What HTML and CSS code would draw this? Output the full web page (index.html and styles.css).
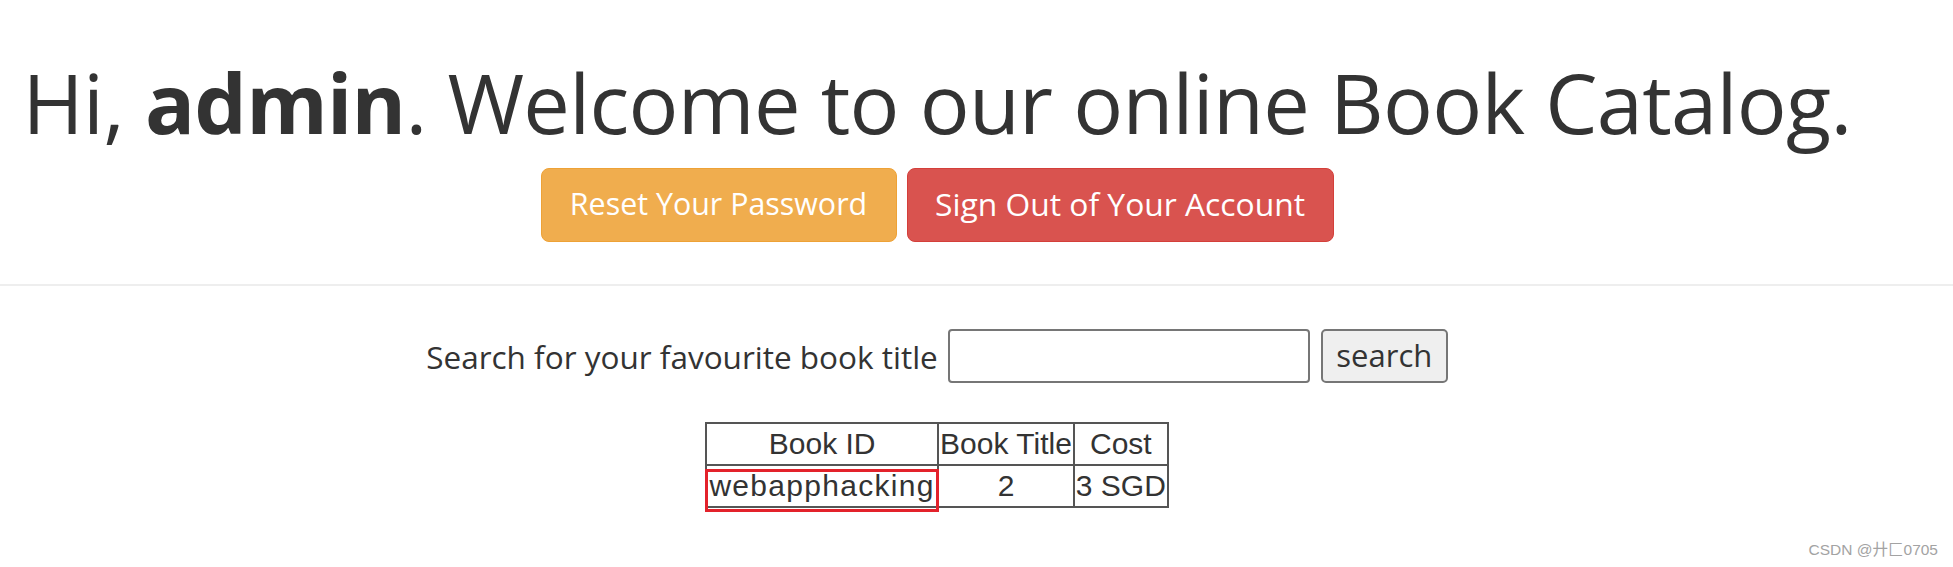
FILE: index.html
```html
<!DOCTYPE html>
<html lang="en">
<head>
<meta charset="utf-8">
<title>Book Catalog</title>
<link rel="stylesheet" href="styles.css">
</head>
<body>
<div class="page">
  <header class="welcome">
    <h1 class="title">Hi, <b>admin</b>. Welcome to our online Book Catalog.</h1>
    <div class="actions">
      <a class="btn btn-warning" href="#">Reset Your Password</a>
      <a class="btn btn-danger" href="#">Sign Out of Your Account</a>
    </div>
  </header>
  <hr class="divider">
  <main class="content">
    <form class="search">
      <label class="search-label" for="q">Search for your favourite book title</label>
      <input class="search-input" id="q" type="text">
      <button class="search-btn" type="button">search</button>
    </form>
    <table class="books">
      <thead>
        <tr><th class="col-id">Book ID</th><th>Book Title</th><th>Cost</th></tr>
      </thead>
      <tbody>
        <tr><td class="marked">webapphacking<span class="mark"></span></td><td>2</td><td>3 SGD</td></tr>
      </tbody>
    </table>
  </main>
  <div class="watermark">CSDN @廾匚0705</div>
</div>
</body>
</html>
```
FILE: styles.css
```css
html, body {
  margin: 0;
  padding: 0;
  background: #fff;
}
.page {
  position: relative;
  width: 1953px;
  height: 567px;
  overflow: hidden;
  color: #333;
  font-family: "Open Sans", "Noto Sans", sans-serif;
}
.welcome {
  width: 1874px;
  text-align: center;
  padding-top: 60px;
}
.title {
  margin: 0;
  font-size: 83px;
  line-height: 83px;
  letter-spacing: -0.7px;
  font-weight: 400;
  white-space: nowrap;
}
.title b {
  font-weight: 700;
}
.actions {
  display: flex;
  justify-content: center;
  gap: 10px;
  margin-top: 25px;
}
.btn {
  display: flex;
  align-items: center;
  justify-content: center;
  box-sizing: border-box;
  height: 74px;
  padding: 0 20px 4px;
  border: 1px solid transparent;
  border-radius: 8px;
  color: #fff;
  text-decoration: none;
  font-size: 30.4px;
  white-space: nowrap;
}
.btn-warning {
  width: 356px;
  background: #f0ad4e;
  border-color: #eea236;
}
.btn-danger {
  width: 427px;
  background: #d9534f;
  border-color: #d43f3a;
  font-size: 31.8px;
}
.divider {
  margin: 42px 0 0;
  height: 0;
  border: 0;
  border-top: 2px solid #eee;
}
.content {
  width: 1874px;
  display: flex;
  flex-direction: column;
  align-items: center;
}
.search {
  margin-top: 43px;
  display: flex;
  align-items: center;
  height: 54px;
}
.search-label {
  font-size: 31.5px;
  margin-right: 10px;
  white-space: nowrap;
}
.search-input {
  box-sizing: border-box;
  width: 362px;
  height: 54px;
  border: 2px solid #767676;
  border-radius: 4px;
  padding: 0 6px;
  margin: 0 11px 0 0;
  background: #fff;
}
.search-btn {
  box-sizing: border-box;
  width: 127px;
  height: 54px;
  border: 2px solid #767676;
  border-radius: 5px;
  background: #efefef;
  color: #333;
  font-family: "Open Sans", "Noto Sans", sans-serif;
  font-size: 31px;
  padding: 0 0 3px;
}
.books {
  margin-top: 39px;
  border-collapse: collapse;
  font-family: "Liberation Sans", Arial, sans-serif;
  font-size: 30px;
  color: #333;
  white-space: nowrap;
}
.books th, .books td {
  border: 2px solid #555;
  padding: 1px 1px;
  line-height: 38px;
  font-weight: 400;
  text-align: center;
}
.books .col-id { min-width: 228px; }
.marked {
  position: relative;
  letter-spacing: 1.3px;
}
.mark {
  position: absolute;
  left: -2px;
  right: -2px;
  top: 3px;
  bottom: -6px;
  border: 3px solid #e3222b;
}
.watermark {
  position: absolute;
  right: 15px;
  bottom: 8px;
  font-family: "Liberation Sans", "Noto Sans CJK SC", sans-serif;
  font-size: 15.5px;
  color: #a3a3a3;
}
```
